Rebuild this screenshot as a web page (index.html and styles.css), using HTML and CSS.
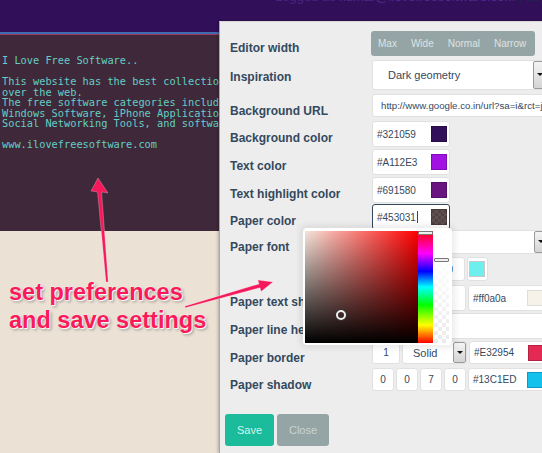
FILE: index.html
```html
<!DOCTYPE html>
<html>
  <head>
    <title>Editor settings</title>
    <link rel="stylesheet" href="styles.css">
  </head>
  <body>
    <div class="topbar">
      <div class="login">Logged as <span class="mail">kumar@ilovefreesoftware.com</span> <span class="logout">| Logout</span></div>
    </div>

    <div class="paper">
<pre class="paper-text">I Love Free Software..

This website has the best collection of free software from all
over the web.
The free software categories include Web Apps, Freeware,
Windows Software, iPhone Applications, Android Apps, Online Tools,
Social Networking Tools, and software for many other categories.

www.ilovefreesoftware.com</pre>
    </div>

    <div class="panel">
      <div class="row editor">
        <div class="label">Editor width</div>
        <div class="ctl">
          <div class="seg"><span>Max</span><span>Wide</span><span>Normal</span><span>Narrow</span></div>
        </div>
      </div>

      <div class="row tall">
        <div class="label">Inspiration</div>
        <div class="ctl">
          <div class="field select wide inspire">Dark geometry<span class="drop"></span></div>
        </div>
      </div>

      <div class="row sm">
        <div class="label">Background URL</div>
        <div class="ctl">
          <div class="field wide url">http://www.google.co.in/url?sa=i&amp;rct=j&amp;q=&amp;esrc=s</div>
        </div>
      </div>

      <div class="row">
        <div class="label">Background color</div>
        <div class="ctl">
          <div class="field color">#321059<span class="swatch sw-bg"></span></div>
        </div>
      </div>

      <div class="row">
        <div class="label">Text color</div>
        <div class="ctl">
          <div class="field color">#A112E3<span class="swatch sw-text"></span></div>
        </div>
      </div>

      <div class="row h27">
        <div class="label">Text highlight color</div>
        <div class="ctl">
          <div class="field color">#691580<span class="swatch sw-high"></span></div>
        </div>
      </div>

      <div class="row h26">
        <div class="label">Paper color</div>
        <div class="ctl">
          <div class="field color focus">#453031<span class="caret"></span><span class="swatch sw-paper"></span></div>
        </div>
      </div>

      <div class="row font">
        <div class="label">Paper font</div>
        <div class="ctl stack">
          <div class="field select wide">Inconsolata<span class="drop"></span></div>
          <div class="line">
            <div class="field size">10</div>
            <div class="field box"><span class="swatch sw-font"></span></div>
          </div>
        </div>
      </div>

      <div class="row">
        <div class="label">Paper text shadow</div>
        <div class="ctl">
          <div class="field num n32">1</div>
          <div class="field num n32">1</div>
          <div class="field num n26">2</div>
          <div class="field color">#ff0a0a<span class="swatch sw-light"></span></div>
        </div>
      </div>

      <div class="row">
        <div class="label">Paper line height</div>
        <div class="ctl">
          <div class="field wide">1.6</div>
        </div>
      </div>

      <div class="row sm">
        <div class="label">Paper border</div>
        <div class="ctl">
          <div class="field num n28 mid">1</div>
          <div class="field select solid">Solid<span class="drop"></span></div>
          <div class="field color">#E32954<span class="swatch sw-border"></span></div>
        </div>
      </div>

      <div class="row sm">
        <div class="label">Paper shadow</div>
        <div class="ctl">
          <div class="field num n22 mid">0</div>
          <div class="field num n22 mid">0</div>
          <div class="field num n22 mid">7</div>
          <div class="field num n22 mid">0</div>
          <div class="field color">#13C1ED<span class="swatch sw-shadow"></span></div>
        </div>
      </div>

      <div class="actions">
        <button class="btn save">Save</button>
        <button class="btn close">Close</button>
      </div>
    </div>

    <div class="picker">
      <div class="sv"><span class="dot"></span></div>
      <div class="hue"><span class="knob"></span></div>
      <div class="alpha"><span class="knob alpha-knob"></span></div>
    </div>

    <div class="note">set preferences<br>and save settings</div>

    <svg class="arrows" width="542" height="453" viewBox="0 0 542 453">
      <polygon points="106,282 108.2,282 101.6,192 108,193 98,178 91,191 97.6,192" />
      <polygon points="184.8,306.2 259,283.9 257.9,280 273,282 261.1,291.6 260,287.7 185.2,307.8" />
    </svg>
  </body>
</html>
```

FILE: styles.css
```css
body {
  margin: 0;
  width: 542px;
  height: 453px;
  overflow: hidden;
  position: relative;
  background: #ebe1d5;
  font-family: "Liberation Sans", Arial, sans-serif;
}

.topbar {
  height: 32px;
  background: #321059;
  overflow: hidden;
}
.login {
  margin-top: -11px;
  padding-left: 275px;
  white-space: nowrap;
  font-size: 13px;
  line-height: 16px;
  color: #46247f;
}
.login .mail { color: #4f2a92; }
.login .logout { color: #202449; }

.paper {
  height: 197px;
  background: #3f2839;
  border-top: 2px solid #3f6cb0;
  box-shadow: inset 0 1px 0 #9a3a5c;
  overflow: hidden;
}
.paper-text {
  margin: 0;
  padding: 21px 0 0 2px;
  font-family: "DejaVu Sans Mono", "Liberation Mono", monospace;
  font-size: 10.3px;
  line-height: 10.5px;
  color: #62cfc6;
}

/* settings panel */
.panel {
  position: absolute;
  left: 219px;
  top: 21px;
  width: 360px;
  bottom: 0;
  box-sizing: border-box;
  padding: 9px 0 0 10px;
  background: #ededed;
  border-left: 1px solid #a8a8a8;
  border-top: 1px solid #d6d6d6;
  box-shadow: -1px 0 3px rgba(0,0,0,0.25);
}
.row {
  display: flex;
  height: 28px;
}
.row.h27 { height: 27px; }
.row.h26 { height: 26px; }
.row.editor { height: 29px; }
.row.tall { height: 34px; }
.row.sm { height: 27px; }
.row.font { height: 55px; }

.label {
  width: 142px;
  flex: none;
  padding-top: 9px;
  font-size: 12px;
  font-weight: bold;
  line-height: 16px;
  color: #34495e;
  white-space: nowrap;
}
.ctl {
  display: flex;
  gap: 2px;
  align-items: flex-start;
}
.ctl.stack {
  flex-direction: column;
  gap: 3px;
}
.line {
  display: flex;
  gap: 2px;
}

.seg {
  display: flex;
  height: 25px;
  margin-left: -1px;
  padding: 0 2px 0 0;
  background: #95a5a6;
  border-radius: 3px;
}
.seg span {
  padding: 0 7px;
  font-size: 10px;
  line-height: 25px;
  color: #dde3e3;
}

.field {
  position: relative;
  display: flex;
  align-items: center;
  box-sizing: border-box;
  height: 26px;
  padding: 0 4px;
  background: #fff;
  border: 1px solid #e1e1e1;
  border-radius: 3px;
  font-size: 10px;
  color: #34495e;
  white-space: nowrap;
  overflow: hidden;
}
.row.tall .field { height: 30px; }
.row.sm .field { height: 23px; }
.row.font .field { height: 24px; }

.field.wide { width: 178px; }
.field.url { padding-left: 8px; font-size: 9.7px; }
.field.color { width: 78px; }
.field.focus {
  border-color: #34495e;
}
.caret {
  width: 1px;
  height: 12px;
  margin-left: 1px;
  background: #34495e;
}
.field.select { font-size: 11px; }
.field.inspire { padding-left: 15px; }
.field.solid {
  width: 65px;
  padding-left: 10px;
}
.field.size {
  width: 93px;
  justify-content: flex-end;
  padding-right: 11px;
}
.field.box {
  width: 21px;
  padding: 0 2px;
}
.field.num { padding-left: 4px; }
.field.mid { justify-content: center; padding: 0; }
.n22 { width: 22px; }
.n26 { width: 26px; }
.n28 { width: 28px; }
.n32 { width: 32px; }

.drop {
  position: absolute;
  right: 0;
  top: 0;
  bottom: 0;
  width: 13px;
  box-sizing: border-box;
  border: 1px solid #9a9a9a;
  border-radius: 2px;
  background: linear-gradient(#f4f4f4, #d4d4d4);
}
.inspire .drop { right: 2px; width: 14px; }
.wide .drop { right: 2px; }
.drop::after {
  content: "";
  position: absolute;
  left: 50%;
  top: 50%;
  margin: -2px 0 0 -3px;
  border-left: 3px solid transparent;
  border-right: 3px solid transparent;
  border-top: 3px solid #111;
}

.swatch {
  position: absolute;
  right: 2px;
  top: 50%;
  width: 16px;
  height: 16px;
  margin-top: -8px;
  box-sizing: border-box;
  border: 1px solid rgba(0,0,0,0.2);
}
.field.box .swatch { right: 2px; }
.sw-bg { background: #321059; }
.sw-text { background: #a112e3; }
.sw-high { background: #691580; }
.sw-paper {
  background:
    linear-gradient(rgba(69,48,49,0.7), rgba(69,48,49,0.7)),
    repeating-conic-gradient(#9a9a9a 0 25%, #6e6e6e 0 50%) 0 0 / 6px 6px;
}
.sw-font { background: #6df0ed; border-color: #c8c8c8; }
.sw-light { background: #f6f2e9; border-color: #ddd; }
.sw-border { background: #e32954; }
.sw-shadow { background: #13c1ed; }

.actions {
  display: flex;
  gap: 3px;
  margin: 19px 0 0 -5px;
}
.btn {
  height: 32px;
  border: 0;
  border-radius: 3px;
  font-family: "Liberation Sans", Arial, sans-serif;
  font-size: 11px;
  padding: 0;
}
.btn.save {
  width: 49px;
  background: #1abc9c;
  color: #d6f4ec;
}
.btn.close {
  width: 52px;
  background: #95a5a6;
  color: #c9d3d4;
}

/* color picker popover */
.picker {
  position: absolute;
  left: 303px;
  top: 228px;
  display: flex;
  padding: 3px 3px 2px 2px;
  background: #fff;
  border-radius: 4px;
  box-shadow: 0 0 6px 3px rgba(0,0,0,0.08);
}
.sv {
  position: relative;
  width: 113px;
  height: 112px;
  background:
    linear-gradient(to top, #000, rgba(0,0,0,0)),
    linear-gradient(to right, #f4e6dc, #f00);
}
.dot {
  position: absolute;
  left: 31px;
  top: 79px;
  width: 6px;
  height: 6px;
  border: 2px solid #eee;
  border-radius: 50%;
  box-shadow: 0 0 0 1px #333;
}
.hue {
  position: relative;
  width: 15px;
  height: 112px;
  background: linear-gradient(#f00, #f0f 20%, #00f 36%, #0ff 50%, #0f0 66%, #ff0 84%, #f00);
}
.alpha {
  position: relative;
  width: 15px;
  height: 112px;
  margin-left: 1px;
  background:
    linear-gradient(#fff 20%, rgba(255,255,255,0.4)),
    repeating-conic-gradient(#ddd 0 25%, #fff 0 50%) 0 0 / 8px 8px;
}
.knob {
  position: absolute;
  left: 0;
  right: 0;
  top: 0;
  height: 2px;
  border: 1px solid #777;
  border-radius: 1px;
  background: #eee;
}
.alpha-knob { top: 27px; }

/* annotation */
.note {
  position: absolute;
  left: 9px;
  top: 278px;
  font-family: "Liberation Sans", Arial, sans-serif;
  font-weight: bold;
  font-size: 23.5px;
  line-height: 28px;
  color: #fa1a5a;
  text-shadow: 0 0 2px #fff, 1px 1px 1px #fff, 2px 2px 3px rgba(0,0,0,0.35);
}
.arrows {
  position: absolute;
  left: 0;
  top: 0;
}
.arrows polygon {
  fill: #f5195c;
  stroke: rgba(255,255,255,0.5);
  stroke-width: 0.5;
}
```
